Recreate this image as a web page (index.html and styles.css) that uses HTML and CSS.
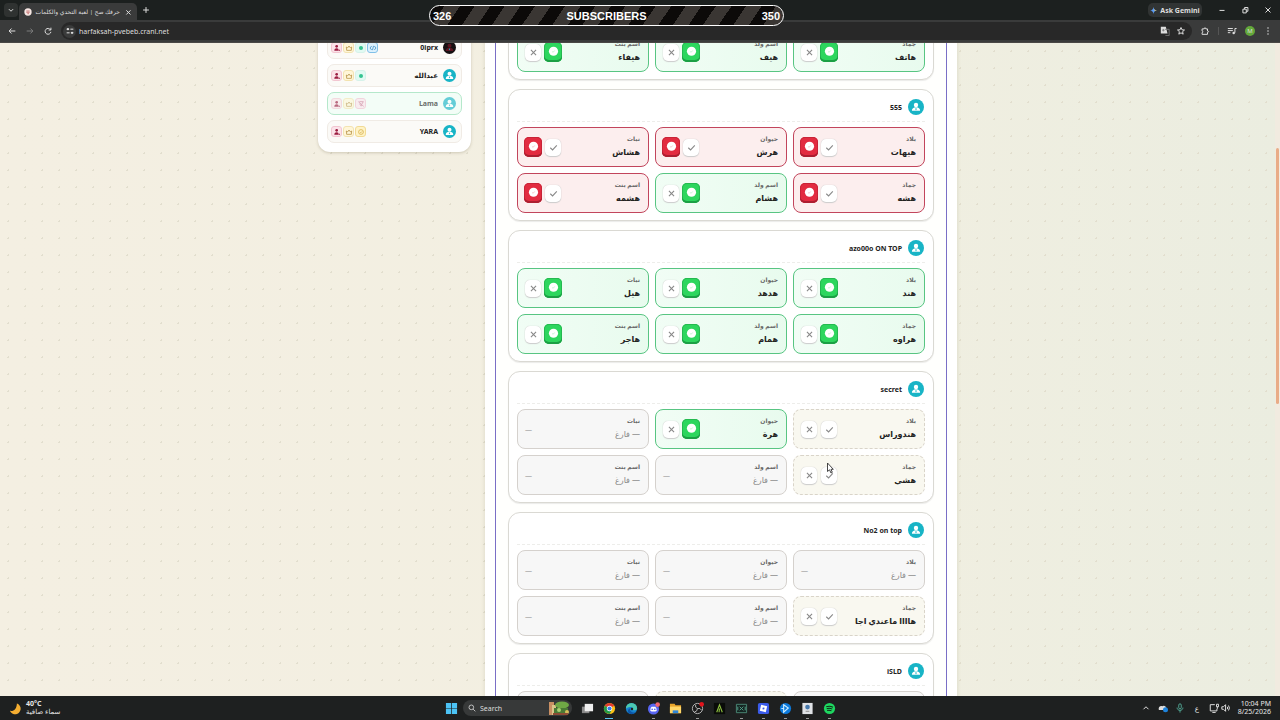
FILE: index.html
```html
<!DOCTYPE html>
<html lang="ar">
<head>
    <meta charset="UTF-8">
    <meta name="viewport" content="width=device-width, initial-scale=1.0">
    <title>حرفك صح | لعبة التحدي والكلمات</title>
    <link rel="stylesheet" href="styles.css">
</head>
<body>
    <svg class="sprite" aria-hidden="true">
        <symbol id="user" viewBox="0 0 16 16"><circle cx="8" cy="5.3" r="2.9" fill="currentColor"/><path d="M2.500 13c0-3 2-4.700 5.500-4.700s5.500 1.700 5.500 4.700z" fill="currentColor"/><path d="M8 9l1 1.500-1 2-1-2z" fill="#18b4c6"/></symbol>
        <symbol id="check" viewBox="0 0 12 12"><path d="M2.500 6.300L5 8.600l4.600-5" fill="none" stroke="currentColor" stroke-width="1.200"/></symbol>
        <symbol id="cross" viewBox="0 0 12 12"><path d="M3.200 3.200l5.600 5.600M8.800 3.200L3.200 8.800" fill="none" stroke="currentColor" stroke-width="1.200"/></symbol>
        <symbol id="dot" viewBox="0 0 12 12"><circle cx="6" cy="5.700" r="5" fill="#fff"/><path d="M4.600 6l1 .9 1.700-2" fill="none" stroke="currentColor" stroke-width=".6" opacity=".5"/></symbol>
        <symbol id="kick" viewBox="0 0 12 12"><circle cx="5.500" cy="3.500" r="2" fill="currentColor"/><path d="M2 10c0-2 1-3.600 3.500-3.600 1.200 0 2 .3 2.600 1V10zM8.500 8.500h2V10h-2z" fill="currentColor"/></symbol>
        <symbol id="crown" viewBox="0 0 12 12"><path d="M2 4.500l2 1.300L6 3l2 2.800 2-1.300-.5 5h-7z" fill="none" stroke="currentColor" stroke-width="1.100"/></symbol>
        <symbol id="live" viewBox="0 0 12 12"><circle cx="6" cy="6" r="3" fill="currentColor"/></symbol>
        <symbol id="code" viewBox="0 0 12 12"><path d="M4 3L1.500 6 4 9M8 3l2.500 3L8 9M6.800 2.800L5.200 9.200" fill="none" stroke="currentColor" stroke-width="1.200"/></symbol>
        <symbol id="mute" viewBox="0 0 12 12"><path d="M2 2.500l8 7M3.500 2.500h6L7 6.500M4 5.500l1.500 3h2" fill="none" stroke="currentColor" stroke-width="1"/></symbol>
        <symbol id="clock" viewBox="0 0 12 12"><circle cx="6" cy="6" r="3.600" fill="none" stroke="currentColor"/><path d="M4.500 6.200L5.700 7.300 7.700 5" fill="none" stroke="currentColor" stroke-width=".9"/></symbol>
    </svg>

    <header class="browser">
        <div class="tabs">
            <button class="tab-menu" aria-label="Tabs"><svg class="ic" viewBox="0 0 12 12"><path d="M3.500 5L6 7.500 8.500 5" class="line"/></svg></button>
            <div class="tab">
                <svg class="favicon" viewBox="0 0 12 12"><circle cx="6" cy="6" r="5.500" fill="#f6e7e4"/><path d="M3.500 4.500h5M3.500 6.500h5M5 8.500h2.500" stroke="#b24747" fill="none"/></svg>
                <span class="tab-title" dir="rtl">حرفك صح | لعبة التحدي والكلمات</span>
                <button class="tab-close" aria-label="Close"><svg class="ic" viewBox="0 0 12 12"><path d="M4 4l5 5M9 4L4 9" class="line"/></svg></button>
            </div>
            <button class="tab-new" aria-label="New tab"><svg class="ic" viewBox="0 0 12 12"><path d="M6 2.500v7M2.500 6h7" class="line"/></svg></button>
            <button class="gemini"><svg class="spark" viewBox="0 0 12 12"><path d="M6 0q.6 5.400 6 6-5.400.6-6 6-.6-5.400-6-6 5.400-.6 6-6z" fill="#5b9cf5"/><path d="M6 0q.6 5.400 6 6-3 .3-4 1z" fill="#e6c25a"/></svg>Ask Gemini</button>
            <div class="win-buttons">
                <button aria-label="Minimize"><svg class="ic" viewBox="0 0 12 12"><path d="M3 6.500h6" class="line"/></svg></button>
                <button aria-label="Restore"><svg class="ic" viewBox="0 0 12 12"><path d="M3.500 5h4v4.500h-4zM5.500 5V3h4v4.500h-2" class="line"/></svg></button>
                <button aria-label="Close window"><svg class="ic" viewBox="0 0 12 12"><path d="M3 3l6 6M9 3L3 9" class="line"/></svg></button>
            </div>
        </div>
        <div class="toolbar">
            <button aria-label="Back"><svg class="ic" viewBox="0 0 12 12"><path d="M10 6H2.500M5.500 3l-3 3 3 3" class="line"/></svg></button>
            <button class="dim" aria-label="Forward"><svg class="ic" viewBox="0 0 12 12"><path d="M2 6h7.500M6.500 3l3 3-3 3" class="line"/></svg></button>
            <button aria-label="Reload"><svg class="ic" viewBox="0 0 12 12"><path d="M9 4.500A3.500 3.500 0 1 0 9.500 7M9.500 2v2.800H6.700" class="line"/></svg></button>
            <div class="omnibox">
                <span class="site"><svg class="ic" viewBox="0 0 12 12"><path d="M2 3.800h3M6.500 3.800H10M2 8.200h3.500M7 8.200h3" class="line"/><circle cx="3.500" cy="3.800" r="1.300" fill="#ddd"/><circle cx="8.500" cy="8.200" r="1.300" fill="#ddd"/></svg></span>
                <input type="text" aria-label="Address" value="harfaksah-pvebeb.cranl.net">
                <button aria-label="Translate"><svg class="ic" viewBox="0 0 12 12"><path d="M1 1h6l2 8H1z" fill="#ddd"/><path d="M6 4h5v7.500H6.500M4 3.500v3M2.500 5h3" stroke="#777" fill="none"/></svg></button>
                <button aria-label="Bookmark"><svg class="ic" viewBox="0 0 12 12"><path d="M6 1.800l1.200 2.800 3 .2-2.300 2 .7 3L6 8.200 3.400 9.800l.7-3-2.300-2 3-.2z" class="line"/></svg></button>
            </div>
            <button aria-label="Extensions"><svg class="ic" viewBox="0 0 12 12"><path d="M2.500 3.500H5C5 1.500 7 1.500 7 3.500h2V6c1.800 0 1.800 1.500 0 1.500v2.500H2.500V8c1.300 0 1.300-2 0-2z" class="line"/></svg></button>
            <span class="sep"></span>
            <button aria-label="Media"><svg class="ic" viewBox="0 0 12 12"><path d="M1 3h6M1 5.500h6M1 8h3M9.500 8V3H11.500" class="line"/><circle cx="8" cy="8.500" r="1.500" fill="#ddd"/></svg></button>
            <button class="profile" aria-label="Profile">M</button>
            <button aria-label="More"><svg class="ic" viewBox="0 0 12 12"><g fill="#ddd"><circle cx="6" cy="2.500" r=".9"/><circle cx="6" cy="6" r=".9"/><circle cx="6" cy="9.500" r=".9"/></g></svg></button>
        </div>
    </header>

    <div class="page" dir="rtl">
        <div class="layout">
            <main class="panel">
                <div class="results" id="results"></div>
            </main>
            <aside class="players" id="players"></aside>
        </div>
        <div class="scrollbar"><div class="thumb"></div></div>
    </div>

    <footer class="taskbar">
        <div class="weather">
            <svg class="moon" viewBox="0 0 14 14"><path d="M8.500 1.500a6 6 0 1 1-7.500 8c4 1 7.500-2.500 7.500-8z" fill="#f5ae31"/></svg>
            <div><b>40°C</b><span dir="rtl">سماء صافية</span></div>
        </div>
        <div class="apps">
            <div class="start">
                <button aria-label="Start"><svg class="app" viewBox="0 0 14 14"><path d="M1 1h5.600v5.600H1zM7.400 1H13v5.600H7.400zM1 7.400h5.600V13H1zM7.400 7.400H13V13H7.400z" fill="#4cc3f5"/></svg></button>
                <label class="search">
                    <svg class="ic" viewBox="0 0 12 12"><circle cx="5" cy="5" r="3.500" class="line"/><path d="M7.600 7.600L11 11" class="line"/></svg>
                    <input type="text" aria-label="Search" placeholder="Search">
                    <svg class="garden" viewBox="0 0 22 14"><path d="M1 1h5v13H1z" fill="#c98f63"/><path d="M4 4h4v10H4z" fill="#d9c58a"/><ellipse cx="14" cy="4" rx="7" ry="3.500" fill="#6fa845"/><path d="M6 7h14v5H6z" fill="#4a7a35"/><circle cx="11" cy="9" r="2" fill="#a8cf70"/><circle cx="19" cy="11" r="2" fill="#d6bd5a"/><path d="M5 12h15v2H5z" fill="#8b4a34"/></svg>
                </label>
            </div>
            <button aria-label="Task view"><svg class="app" viewBox="0 0 14 14"><path d="M1 5h8v7H1z" fill="#888"/><path d="M4 2h9v8H4z" fill="#eee"/></svg></button>
            <button class="current" aria-label="Chrome"><svg class="app" viewBox="0 0 14 14"><circle cx="7" cy="7" r="6" fill="#fbc116"/><path d="M7 7L1.800 4a6 6 0 0 1 10.400 0z" fill="#e33b2e"/><path d="M7 7L1.800 4A6 6 0 0 0 7 13l2-3.500z" fill="#229b48"/><circle cx="7" cy="7" r="2.900" fill="#fff"/><circle cx="7" cy="7" r="2.200" fill="#3b7de9"/></svg></button>
            <button aria-label="Edge"><svg class="app" viewBox="0 0 14 14"><circle cx="7" cy="7" r="6" fill="#1683d0"/><path d="M1 7a6 6 0 0 1 12 0c0 2-3 2.500-4.500 1.500C10 6 7 3.500 1 7z" fill="#4bc8b0"/><path d="M5.500 7c-1 3 2 5 6 4a6 6 0 0 1-7 1.500C2.500 11 2.500 7.500 5.500 7z" fill="#0d57a8"/><circle cx="7.500" cy="7.500" r="1.300" fill="#1e2020"/></svg></button>
            <button class="running" aria-label="Discord"><svg class="app" viewBox="0 0 14 14"><circle cx="7" cy="7.500" r="6" fill="#5865f2"/><path d="M3.500 9.500q0-3.500 1.500-4.500h4q1.500 1 1.500 4.500l-1.500.8H5z" fill="#fff"/><circle cx="5.600" cy="7.800" r=".9" fill="#5865f2"/><circle cx="8.400" cy="7.800" r=".9" fill="#5865f2"/><circle cx="11.500" cy="2.800" r="2.500" fill="#ef6672"/></svg></button>
            <button aria-label="Files"><svg class="app" viewBox="0 0 14 14"><path d="M1 2h5l1 1.500h6V12H1z" fill="#e9a52b"/><path d="M1 5h12v7H1z" fill="#ffd667"/><path d="M4 9h6v3H4z" fill="#2f86d8"/></svg></button>
            <button class="running" aria-label="OBS"><svg class="app" viewBox="0 0 14 14"><circle cx="7" cy="7" r="5.500" fill="#1b1b1b" stroke="#bbb"/><path d="M7 7q-3-1-2-4M7 7q3-1 4.500 2M7 7q0 3-3.500 4" stroke="#bbb" fill="none"/><circle cx="11.500" cy="2.500" r="2.500" fill="#e2141c"/></svg></button>
            <button aria-label="Launcher"><svg class="app" viewBox="0 0 14 14"><path d="M1 1h12v12H1z" fill="#090b08"/><path d="M4 11l3-8 3 8M6.500 11L7 7" stroke="#8dbf3f" fill="none" stroke-width="1.200"/></svg></button>
            <button class="running" aria-label="Capture"><svg class="app" viewBox="0 0 14 14"><path d="M1.500 2.500h11v9h-11z" fill="#152522" stroke="#4c8a78"/><path d="M5 5l4 4M9 5L5 9M3 5v4M11 5v4" stroke="#54a08a" fill="none"/></svg></button>
            <button class="running" aria-label="Roblox"><svg class="app" viewBox="0 0 14 14"><rect x="1" y="1" width="12" height="12" rx="2" fill="#3a5bea"/><path d="M4.500 3l6.500 1.700L9.400 11 3 9.400z" fill="#fff"/><path d="M6.300 5.800l1.900.5-.5 1.900-1.900-.5z" fill="#3a5bea"/></svg></button>
            <button class="running" aria-label="Battle.net"><svg class="app" viewBox="0 0 14 14"><circle cx="7" cy="7" r="6" fill="#0b79dc"/><path d="M5 3l5 3.500L5 11z" fill="none" stroke="#c9ecff" stroke-width="1.200"/><path d="M2.500 7h3" stroke="#c9ecff"/></svg></button>
            <button class="running" aria-label="Viewer"><svg class="app" viewBox="0 0 14 14"><path d="M1.500 1h11v12h-11z" fill="#dfe2e6"/><circle cx="7" cy="5.500" r="2.500" fill="#4679ad"/><path d="M5 10h4" stroke="#888"/></svg></button>
            <button class="running" aria-label="Spotify"><svg class="app" viewBox="0 0 14 14"><circle cx="7" cy="7" r="6" fill="#1ed760"/><path d="M3.500 5q4-1.200 7.200.6M4 7.200q3.200-1 6 .5M4.500 9.200q2.500-.7 4.700.4" stroke="#102a18" fill="none" stroke-width="1.100"/></svg></button>
        </div>
        <div class="tray">
            <svg class="ic" viewBox="0 0 12 12"><path d="M3 7.500l3-3 3 3" class="line"/></svg>
            <svg class="ic" viewBox="0 0 12 12"><path d="M1 8.500C0 5 3 3 5 4c2-2 5 0 5 2.500v2z" fill="#ddd"/><circle cx="9" cy="8" r="3" fill="#1d83dc"/></svg>
            <svg class="ic" viewBox="0 0 12 12"><path d="M4.500 2.500a1.500 1.500 0 0 1 3 0v3a1.500 1.500 0 0 1-3 0zM2.500 5.500c0 4.500 7 4.500 7 0M6 9v2.500" fill="none" stroke="#58b8a4"/></svg>
            <span class="lang">ع</span>
            <div class="net">
                <svg class="ic" viewBox="0 0 12 12"><path d="M7 2H1.500v7.500h8V7M4 11.500h4M9 1.500h2.500v3H9zM10 4.500V7" class="line"/></svg>
                <svg class="ic" viewBox="0 0 12 12"><path d="M1 4.500h2l2.500-2.500v8L3 7.500H1zM7.500 4.500q1 1.500 0 3M9 3q2.200 3 0 6" class="line"/></svg>
            </div>
            <div class="time"><span>10:04 PM</span><span>8/25/2026</span></div>
        </div>
    </footer>

    <div class="goal"><span>326</span><span>SUBSCRIBERS</span><span>350</span></div>
    <svg class="cursor" viewBox="0 0 8 12"><path d="M1.500 1v8.500l2-1.700L5 11l1.300-.7L5 7.300h2.300z" fill="#fff" stroke="#333" stroke-width=".9"/></svg>

    <script src="script.js"></script>
</body>
</html>
```
FILE: styles.css
```css
* {
  box-sizing: border-box;
}

body {
  margin: 0;
  height: 100vh;
  display: flex;
  flex-direction: column;
  overflow: hidden;
  position: relative;
  font-family: "Noto Sans", "DejaVu Sans", sans-serif;
  font-size: 7px;
  color: #222;
}

button,
input {
  font: inherit;
  color: inherit;
  border: 0;
  padding: 0;
  background: none;
}

button {
  display: flex;
  align-items: center;
  justify-content: center;
}

.sprite {
  position: absolute;
  width: 0;
  height: 0;
}

.ic {
  width: 10px;
  height: 10px;
  flex: none;
}

.line {
  fill: none;
  stroke: #ddd;
  stroke-width: 1.2;
}

/* browser */
.browser {
  flex: none;
  background: #1c201f;
  color: #ddd;
}

.tabs {
  height: 20px;
  display: flex;
  align-items: center;
  padding: 0 4px;
}

.tab-menu {
  width: 14px;
  height: 14px;
  border-radius: 4px;
  background: #2f3231;
}

.tab {
  width: 118px;
  height: 17px;
  align-self: flex-end;
  margin-left: 1px;
  padding: 0 4px 0 5px;
  display: flex;
  align-items: center;
  gap: 3px;
  background: #3a3b3b;
  border-radius: 5px 5px 0 0;
}

.favicon {
  width: 8px;
  height: 8px;
  flex: none;
}

.tab-title {
  flex: 1;
  font-size: 6px;
  white-space: nowrap;
}

.tab-new {
  margin-left: 4px;
}

.gemini {
  margin-left: auto;
  height: 14px;
  width: 54px;
  gap: 3px;
  border-radius: 5px;
  background: #313434;
  font-weight: bold;
}

.spark {
  width: 7px;
  height: 7px;
}

.win-buttons {
  display: flex;
  gap: 13px;
  margin: 0 3px 0 15px;
}

.toolbar {
  height: 23px;
  display: flex;
  align-items: center;
  gap: 8px;
  padding: 0 7px;
  background: #3a3b3b;
  border-bottom: 1px solid #4a4846;
}

.dim {
  opacity: .4;
}

.omnibox {
  flex: 1;
  height: 18px;
  padding: 0 6px 0 2px;
  display: flex;
  align-items: center;
  gap: 6px;
  border-radius: 9px;
  background: #282828;
}

.omnibox input {
  flex: 1;
  min-width: 0;
  margin-left: -3px;
}

.site {
  width: 13px;
  height: 13px;
  display: grid;
  place-items: center;
  border-radius: 50%;
  background: #3a3b3b;
}

.sep {
  width: 1px;
  height: 8px;
  background: #555;
}

.profile {
  width: 10px;
  height: 10px;
  border-radius: 50%;
  background: #63a83a;
  font-size: 6px;
}

/* page */
.page {
  flex: 1;
  min-height: 0;
  overflow: hidden;
  display: flex;
  flex-direction: row;
  background:
    radial-gradient(circle, #e2dece 1px, transparent 1px) 0 0 / 17px 17px,
    linear-gradient(90deg, #f4efe2, #f2efe1 60%, #ebede0);
}

.layout {
  order: 2;
  width: 639px;
  max-width: 100%;
  margin: -29px auto 0;
  display: flex;
  gap: 14px;
  align-items: flex-start;
}

.panel {
  flex: 1;
  padding: 0 10px;
  background: #fff;
  box-shadow: 0 0 4px rgba(120, 110, 80, .2);
}

.results {
  padding: 8px 12px;
  display: flex;
  flex-direction: column;
  gap: 9px;
  border: 1px solid #7a6fc6;
  border-width: 0 1px;
  background: #fffffd;
}

.card {
  padding: 9px 8px 7px;
  border: 1px solid #dad9d3;
  border-radius: 12px;
  background: #fff;
  box-shadow: 0 1px 1px rgba(0, 0, 0, .08);
}

.card:last-child {
  padding-bottom: 48px;
}

.card-head {
  display: flex;
  align-items: center;
  gap: 6px;
  height: 23px;
  padding: 0 1px 6px;
  margin-bottom: 5px;
  border-bottom: 1px dashed #ededea;
  font-weight: bold;
}

.avatar {
  width: 16px;
  height: 16px;
  padding: 2px;
  border-radius: 50%;
  background: #18b4c6;
  color: #fff;
  flex: none;
}

.grid {
  display: grid;
  grid-template-columns: repeat(3, 1fr);
  gap: 6px;
}

.cell {
  height: 40px;
  padding: 0 8px 0 6px;
  display: flex;
  align-items: center;
  justify-content: space-between;
  border: 1px solid #d5d1cd;
  border-radius: 8px;
  background: #f7f7f7;
}

.cell-text {
  display: flex;
  flex-direction: column;
}

.cell-label {
  font-size: 6px;
  line-height: 10px;
  font-weight: bold;
  color: #666;
}

.cell-value {
  font-size: 8px;
  line-height: 16px;
  font-weight: bold;
}

.empty .cell-value {
  font-weight: normal;
  color: #888;
}

.good {
  border-color: #58c582;
  background: linear-gradient(90deg, #f1fdf5, #e8fbee);
}

.bad {
  border-color: #c2455c;
  background: #fceeee;
}

.wait {
  border-style: dashed;
  border-color: #d9d4c9;
  background: #f9f8f0;
}

.actions {
  display: flex;
  align-items: center;
  gap: 2px;
}

.mark {
  width: 16px;
  height: 17px;
  margin: 0 1px;
  border-radius: 5px;
  background: #fff;
  color: #888;
  box-shadow: 0 1px 1px #ccc, 0 0 1px #bbb;
}

.mark svg {
  width: 11px;
  height: 11px;
}

.mark.on {
  width: 18px;
  height: 20px;
  margin: 0;
  padding-bottom: 1px;
  background: #2dd65e;
  color: #2dd65e;
  box-shadow: inset 0 -2px #1c9f45, inset 0 0 0 1px #25b950;
}

.bad .mark.on {
  background: #e22b40;
  color: #e22b40;
  box-shadow: inset 0 -2px #ac1f31, inset 0 0 0 1px #c82337;
}

.none {
  padding-left: 1px;
  color: #999;
}

/* players */
.players {
  width: 153px;
  margin-top: 14px;
  padding: 8px 9px 9px;
  display: flex;
  flex-direction: column;
  gap: 5px;
  background: #fff;
  border-radius: 12px;
  box-shadow: 0 1px 3px rgba(120, 110, 80, .3);
}

.player {
  height: 23px;
  padding: 0 5px 0 3px;
  display: flex;
  align-items: center;
  gap: 5px;
  border: 1px solid #f0ebe5;
  border-radius: 7px;
  background: #fbfaf7;
}

.player .avatar {
  width: 13px;
  height: 13px;
  padding: 1px;
}

.player-name {
  flex: 1;
  font-weight: bold;
}

.player.dark .avatar {
  background: #151012;
  color: #5b1420;
}

.player.away {
  border-color: #b5e8cb;
  background: #f3fdf7;
}

.player.away .avatar,
.player.away .player-name,
.player.away .badges {
  opacity: .65;
}

.badges {
  display: flex;
  gap: 1px;
}

.badge {
  width: 11px;
  height: 11px;
  border: 1px solid currentColor;
  border-radius: 3px;
}

.badge svg {
  width: 8px;
  height: 8px;
}

.kick { color: #9b1c40; background: #fbe3e9; border-color: #f2c6d1; }
.crown { color: #b1893a; background: #fff6d8; border-color: #f3e3b0; }
.live { color: #35c391; background: #e1faf2; border-color: #d6f2ea; }
.code { color: #3f8fc4; background: #dcf1fd; border-color: #80c0e8; }
.mute { color: #bb5c7c; background: #fce3ec; border-color: #f1bfd0; }
.clock { color: #d0a53a; background: #fff3c6; border-color: #f1da94; }

.scrollbar {
  order: 1;
  width: 5px;
  flex: none;
  padding: 105px 1px 0;
  background: #f1ebe0;
}

.thumb {
  height: 256px;
  border-radius: 2px;
  background: #e9ac87;
}

/* taskbar */
.taskbar {
  height: 24px;
  flex: none;
  display: grid;
  grid-template-columns: 1fr auto 1fr;
  align-items: center;
  padding: 0 9px;
  background: #1e2020;
  color: #e6e6e6;
}

.weather {
  display: flex;
  align-items: center;
  gap: 4px;
  line-height: 8px;
}

.weather div,
.time {
  display: flex;
  flex-direction: column;
}

.moon {
  width: 13px;
  height: 13px;
}

.apps {
  display: flex;
  align-items: center;
  gap: 8px;
}

.start {
  display: flex;
  align-items: center;
  gap: 5px;
}

.apps button {
  width: 14px;
  height: 22px;
  position: relative;
}

.app {
  width: 13px;
  height: 13px;
}

.apps .running::after,
.apps .current::after {
  content: "";
  position: absolute;
  bottom: 0;
  width: 3px;
  height: 1px;
  background: #999;
}

.apps .current::after {
  width: 8px;
  background: #5cc3f0;
}

.search {
  width: 109px;
  height: 16px;
  padding: 0 2px 0 5px;
  display: flex;
  align-items: center;
  gap: 4px;
  border-radius: 8px;
  background: #373939;
}

.search .ic {
  width: 8px;
  height: 8px;
}

.search input {
  flex: 1;
  min-width: 0;
}

.search input::placeholder {
  color: #ddd;
  opacity: 1;
}

.garden {
  width: 22px;
  height: 14px;
}

.tray {
  justify-self: end;
  display: flex;
  align-items: center;
  gap: 7px;
}

.lang {
  width: 10px;
  text-align: center;
}

.net {
  display: flex;
  gap: 2px;
}

.time {
  text-align: right;
  line-height: 8px;
}

/* stream overlay */
.goal {
  position: absolute;
  top: 5px;
  left: 50%;
  width: 355px;
  height: 21px;
  margin-left: -211px;
  padding: 0 3px;
  display: grid;
  grid-template-columns: 1fr auto 1fr;
  align-items: center;
  border: 1px solid #fff;
  border-radius: 11px;
  background: repeating-linear-gradient(124deg, #0c0a09 0 12px, #3a3633 12px 25px);
  color: #fff;
  font: bold 11px "Liberation Sans", sans-serif;
}

.goal span:last-child {
  text-align: right;
}

.cursor {
  position: absolute;
  left: 826px;
  top: 462px;
  width: 8px;
  height: 12px;
}
```
FILE: script.js
```js
const labels = ['بلاد', 'حيوان', 'نبات', 'جماد', 'اسم ولد', 'اسم بنت'];

// [state, answer] for each category, "from" is the first category shown
const E = ['empty', '— فارغ'];
const results = [
  { from: 3, cells: [['good', 'هاتف'], ['good', 'هيف'], ['good', 'هيفاء']] },
  { name: '555', cells: [['bad', 'هيهات'], ['bad', 'هرش'], ['bad', 'هشاش'], ['bad', 'هشه'], ['good', 'هشام'], ['bad', 'هشمه']] },
  { name: 'azo00o ON TOP', cells: [['good', 'هند'], ['good', 'هدهد'], ['good', 'هيل'], ['good', 'هراوه'], ['good', 'همام'], ['good', 'هاجر']] },
  { name: 'secret', cells: [['wait', 'هندوراس'], ['good', 'هرة'], E, ['wait', 'هشي'], E, E] },
  { name: 'No2 on top', cells: [E, E, E, ['wait', 'هاااا ماعندي اجا'], E, E] },
  { name: 'iSLD', cells: [['empty'], ['wait'], ['empty']] }
];

const players = [
  { name: '0iprx', cls: 'dark', badges: ['code', 'live', 'crown', 'kick'] },
  { name: 'عبدالله', cls: '', badges: ['live', 'crown', 'kick'] },
  { name: 'Lama', cls: 'away', badges: ['mute', 'crown', 'kick'] },
  { name: 'YARA', cls: '', badges: ['clock', 'crown', 'kick'] }
];

const icon = (id, cls = '') => `<svg class="${cls}"><use href="#${id}"/></svg>`;

function actions(state) {
  if (state === 'empty') return '<span class="none">—</span>';
  const yes = state === 'good';
  const no = state === 'bad';
  return `<div class="actions">
    <button class="mark ${yes ? 'on' : ''}" aria-label="صح">${icon(yes ? 'dot' : 'check')}</button>
    <button class="mark ${no ? 'on' : ''}" aria-label="خطأ">${icon(no ? 'dot' : 'cross')}</button>
  </div>`;
}

function cell([state, text], label) {
  if (!text) return `<div class="cell ${state}"></div>`;
  return `<div class="cell ${state}">
    <div class="cell-text"><span class="cell-label">${label}</span><span class="cell-value">${text}</span></div>
    ${actions(state)}
  </div>`;
}

document.getElementById('results').innerHTML = results.map(r => `
  <section class="card">
    ${r.name ? `<div class="card-head">${icon('user', 'avatar')}<span>${r.name}</span></div>` : ''}
    <div class="grid">${r.cells.map((c, i) => cell(c, labels[i + (r.from || 0)])).join('')}</div>
  </section>`).join('');

document.getElementById('players').innerHTML = players.map(p => `
  <div class="player ${p.cls}">
    ${icon('user', 'avatar')}
    <span class="player-name">${p.name}</span>
    <div class="badges">${p.badges.map(b => `<button class="badge ${b}" aria-label="${b}">${icon(b)}</button>`).join('')}</div>
  </div>`).join('');
```
